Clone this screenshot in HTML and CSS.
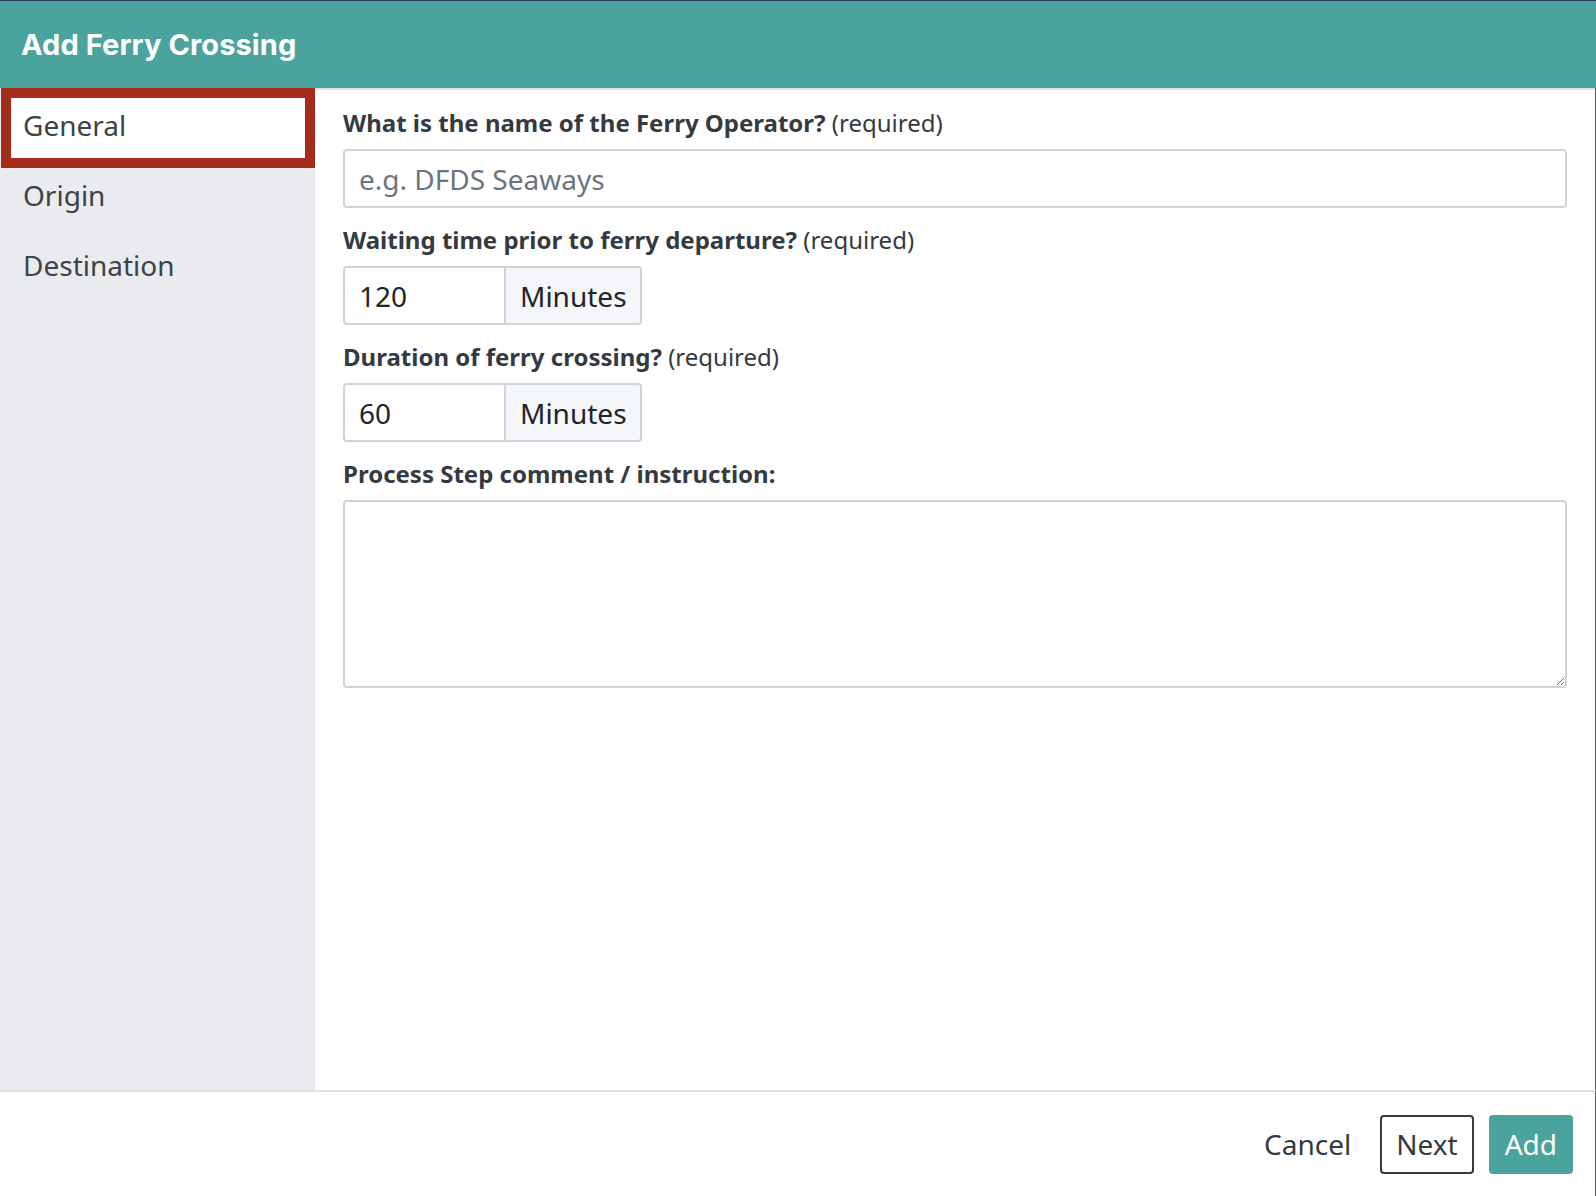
FILE: index.html
```html
<!DOCTYPE html>
<html lang="en">
<head>
    <meta charset="UTF-8">
    <title>Add Ferry Crossing</title>
    <link rel="stylesheet" href="styles.css">
</head>
<body>

    <div class="modal">
        <!-- Title bar -->
        <div class="modal-header">
            <h1>Add Ferry Crossing</h1>
        </div>

        <div class="modal-body">
            <!-- Step list -->
            <ul class="steps">
                <li class="step active">General</li>
                <li class="step">Origin</li>
                <li class="step">Destination</li>
            </ul>

            <!-- General step form -->
            <form class="step-form">
                <div class="form-group">
                    <label for="operator"><strong>What is the name of the Ferry Operator?</strong> (required)</label>
                    <input type="text" id="operator" class="form-control" placeholder="e.g. DFDS Seaways">
                </div>

                <div class="form-group">
                    <label for="waiting"><strong>Waiting time prior to ferry departure?</strong> (required)</label>
                    <div class="input-group">
                        <input type="text" id="waiting" class="form-control" value="120">
                        <span class="addon">Minutes</span>
                    </div>
                </div>

                <div class="form-group">
                    <label for="duration"><strong>Duration of ferry crossing?</strong> (required)</label>
                    <div class="input-group">
                        <input type="text" id="duration" class="form-control" value="60">
                        <span class="addon">Minutes</span>
                    </div>
                </div>

                <div class="form-group">
                    <label for="comment"><strong>Process Step comment / instruction:</strong></label>
                    <textarea id="comment" class="form-control comment"></textarea>
                </div>
            </form>
        </div>

        <div class="modal-footer">
            <button type="button" class="btn btn-link">Cancel</button>
            <button type="button" class="btn btn-outline">Next</button>
            <button type="button" class="btn btn-primary">Add</button>
        </div>
    </div>

</body>
</html>
```

FILE: styles.css
```css
body {
    margin: 0;
    font-family: 'Noto Sans', 'Open Sans', sans-serif;
    color: #343a40;
    background-color: #fff;
}
.modal {
    width: 1596px;
    height: 1196px;
    display: flex;
    flex-direction: column;
}

/* Header */
.modal-header {
    height: 87px;
    border-top: 1px solid #1e3a5c;
    background-color: #4aa49d; /* teal */
    display: flex;
    align-items: center;
    padding: 0 21px;
}
.modal-header h1 {
    margin: 0;
    font-family: 'Inter', sans-serif;
    font-size: 29px;
    font-weight: 700;
    color: #fff;
    letter-spacing: 0.1px;
}

/* Body */
.modal-body {
    flex: 1;
    display: flex;
    border-right: 1px solid #5b5b5b;
}
.steps {
    list-style: none;
    margin: 0;
    padding: 0;
    width: 315px;
    background-color: #e9ebee;
}
.step {
    font-size: 28px;
    line-height: 42px;
    padding: 13px 23px 15px;
    color: #3d4349;
}
.step.active {
    margin-left: 1px;
    padding: 6px 12px 12px;
    border: 10px solid #a52b1a; /* dark red */
    background-color: #fff;
    margin-bottom: -7px;
}
.step-form {
    flex: 1;
    border-top: 2px solid #dee2e6;
    padding: 16px 28px 0 28px;
}
.form-group {
    margin-bottom: 15px;
}
.form-group label {
    display: block;
    font-size: 24px;
    line-height: 33px;
    margin-bottom: 10px;
    color: #343a40;
}
.form-control {
    display: block;
    box-sizing: border-box;
    width: 100%;
    height: 59px;
    padding: 0 14px;
    font-family: inherit;
    font-size: 28px;
    color: #212529;
    border: 2px solid #ced4da;
    border-radius: 4px;
    background-color: #fff;
}
.form-control::placeholder {
    color: #6c757d;
}
.input-group {
    display: flex;
    width: 299px;
}
.input-group .form-control {
    width: 163px;
    border-radius: 4px 0 0 4px;
}
.addon {
    display: flex;
    align-items: center;
    box-sizing: border-box;
    width: 136px;
    height: 59px;
    padding: 0 14px;
    font-size: 28px;
    color: #212529;
    background-color: #f4f6f9;
    border: 2px solid #ced4da;
    border-left: 0;
    border-radius: 0 4px 4px 0;
}
.comment {
    height: 188px;
    margin-top: 1px;
    padding: 12px 14px;
    resize: vertical;
}

/* Footer */
.modal-footer {
    height: 104px;
    border-top: 2px solid #dee2e6;
    border-right: 1px solid #5b5b5b;
    display: flex;
    justify-content: flex-end;
    align-items: center;
    gap: 15px;
    padding-right: 22px;
}
.btn {
    height: 59px;
    box-sizing: border-box;
    padding: 0 14px;
    font-family: inherit;
    font-size: 28px;
    border: 2px solid transparent;
    border-radius: 4px;
    background: none;
    color: #343a40;
    cursor: pointer;
}
.btn-link {
    margin-right: -2px;
}
.btn-outline {
    border-color: #343a40;
    background-color: #fff;
}
.btn-primary {
    background-color: #4aa49d;
    color: #fff;
}
```
